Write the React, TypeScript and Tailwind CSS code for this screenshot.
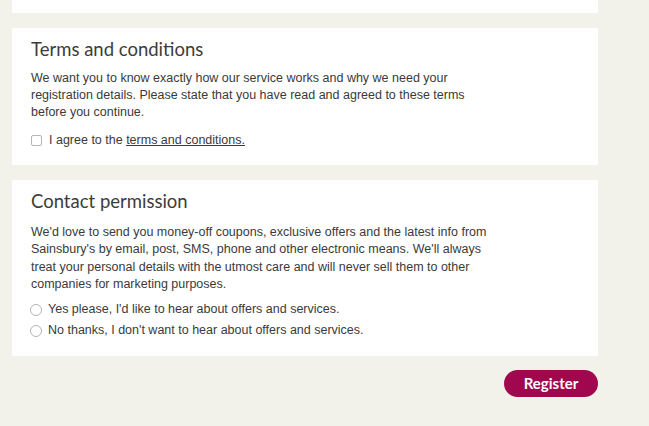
export default function App() {
  return (
    <div className="min-h-[426px] w-full bg-[#f3f2ea] pl-3 pb-8 font-['Liberation_Sans',Arial,sans-serif] text-[#3a3a3a]">
      <div className="w-[586px]">
        <div className="h-[13px] bg-white" />

        <section className="mt-[15px] bg-white px-[19px] pt-[8px] pb-[16px]">
          <h2 className="font-['Lato',sans-serif] text-[18.5px] leading-[26px] text-[#3c3c3c]">
            Terms and conditions
          </h2>
          <p className="mt-[8px] whitespace-nowrap text-[12.5px] leading-[17px]">
            We want you to know exactly how our service works and why we need your
            <br />
            registration details. Please state that you have read and agreed to these terms
            <br />
            before you continue.
          </p>
          <label className="mt-[11px] flex items-center gap-[7px] text-[12.5px] leading-[17px]">
            <span className="h-[11px] w-[11px] rounded-[2px] border border-[#b5b5b5] bg-white" />
            <span>
              I agree to the <span className="underline">terms and conditions.</span>
            </span>
          </label>
        </section>

        <section className="mt-[15px] bg-white px-[19px] pt-[8px] pb-[17px]">
          <h2 className="font-['Lato',sans-serif] text-[18.5px] leading-[26px] text-[#3c3c3c]">
            Contact permission
          </h2>
          <p className="mt-[10px] whitespace-nowrap text-[12.5px] leading-[17.3px]">
            We'd love to send you money-off coupons, exclusive offers and the latest info from
            <br />
            Sainsbury's by email, post, SMS, phone and other electronic means. We'll always
            <br />
            treat your personal details with the utmost care and will never sell them to other
            <br />
            companies for marketing purposes.
          </p>
          <div className="mt-[8px] flex flex-col gap-[4px] text-[12.5px] leading-[17px]">
            <label className="-ml-px flex items-center gap-[6px]">
              <span className="h-[12px] w-[12px] rounded-full border border-[#b5b5b5] bg-white" />
              <span>Yes please, I'd like to hear about offers and services.</span>
            </label>
            <label className="-ml-px flex items-center gap-[6px]">
              <span className="h-[12px] w-[12px] rounded-full border border-[#b5b5b5] bg-white" />
              <span>No thanks, I don't want to hear about offers and services.</span>
            </label>
          </div>
        </section>

        <div className="mt-[14px] flex justify-end">
          <button className="h-[27px] w-[94px] rounded-full bg-[#a0074f] font-['Lato',sans-serif] text-[15px] font-bold text-white">
            Register
          </button>
        </div>
      </div>
    </div>
  )
}
